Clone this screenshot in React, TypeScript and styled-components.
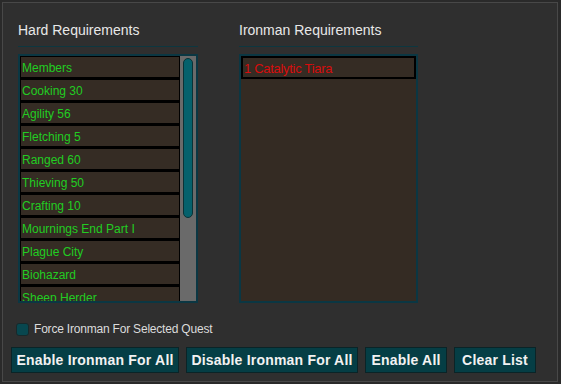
import React from 'react'
import styled, { createGlobalStyle } from 'styled-components'

const GlobalStyle = createGlobalStyle`
  html, body {
    margin: 0;
    padding: 0;
    background: #2a2a2a;
  }
`

const Frame = styled.div`
  box-sizing: border-box;
  margin: 2px;
  width: 556px;
  height: 380px;
  border: 1px solid #484848;
  background: #2f2f2f;
  font-family: 'Liberation Sans', Arial, sans-serif;
  display: flex;
  flex-direction: column;
`

const Columns = styled.div`
  display: flex;
  gap: 41px;
  padding: 19px 0 0 15px;
`

const Column = styled.div<{ $width: number }>`
  width: ${({ $width }) => $width}px;
  display: flex;
  flex-direction: column;
`

const Title = styled.div`
  height: 17px;
  line-height: 17px;
  font-size: 14px;
  color: #e8e8e8;
  white-space: nowrap;
`

const Rule = styled.div`
  margin-top: 7px;
  height: 1px;
  background: #0d3740;
`

const ListBox = styled.div<{ $filled?: boolean }>`
  box-sizing: border-box;
  margin-top: 7px;
  height: 249px;
  border: 2px solid #0b3743;
  display: flex;
  background: ${({ $filled }) => ($filled ? '#342b23' : '#2f2f2f')};
  overflow: hidden;
`

const Rows = styled.div<{ $full?: boolean }>`
  width: ${({ $full }) => ($full ? '100%' : '160px')};
  display: flex;
  flex-direction: column;
  overflow: hidden;
`

const Row = styled.div<{ $tone: 'green' | 'red'; $thick?: boolean }>`
  flex: none;
  box-sizing: border-box;
  height: 23px;
  border: ${({ $thick }) => ($thick ? '2px' : '1px')} solid #000;
  border-bottom-width: 2px;
  background: #352c24;
  padding: 1px 0 0 1px;
  display: flex;
  align-items: center;
  font-size: ${({ $thick }) => ($thick ? 13 : 12)}px;
  letter-spacing: ${({ $thick }) => ($thick ? '-0.3px' : '0')};
  white-space: nowrap;
  color: ${({ $tone }) => ($tone === 'green' ? '#22cc22' : '#d80c0c')};
`

const Track = styled.div`
  width: 16px;
  background: #6a6a6a;
  padding: 2px 0 0 3px;
  box-sizing: border-box;
`

const Thumb = styled.div`
  box-sizing: border-box;
  width: 10px;
  height: 160px;
  border: 1px solid #0b3236;
  border-radius: 5px;
  background: #05616c;
`

const Bottom = styled.div`
  display: flex;
  flex-direction: column;
  margin-top: 20px;
`

const CheckRow = styled.label`
  display: flex;
  align-items: center;
  gap: 5px;
  margin-left: 13px;
  height: 12px;
  font-size: 12px;
  letter-spacing: -0.2px;
  color: #dcdcdc;
  white-space: nowrap;
`

const Box = styled.span`
  box-sizing: border-box;
  flex: none;
  width: 13px;
  height: 13px;
  border: 1px solid #17292b;
  border-radius: 3px;
  background: #08474f;
`

const Buttons = styled.div`
  display: flex;
  gap: 7px;
  margin: 12px 0 0 8px;
`

const Button = styled.button<{ $w: number }>`
  box-sizing: border-box;
  width: ${({ $w }) => $w}px;
  height: 26px;
  padding: 0;
  border: 1px solid #0a2427;
  border-radius: 0;
  background: #053e45;
  color: #f2f2f2;
  font-family: 'Liberation Sans', Arial, sans-serif;
  font-weight: bold;
  font-size: 14px;
  letter-spacing: 0.2px;
  white-space: nowrap;
  text-align: center;
`

const hard = [
  'Members',
  'Cooking 30',
  'Agility 56',
  'Fletching 5',
  'Ranged 60',
  'Thieving 50',
  'Crafting 10',
  'Mournings End Part I',
  'Plague City',
  'Biohazard',
  'Sheep Herder',
]

export default function App() {
  return (
    <>
      <GlobalStyle />
      <Frame>
        <Columns>
          <Column $width={180}>
            <Title>Hard Requirements</Title>
            <Rule />
            <ListBox>
              <Rows>
                {hard.map((item) => (
                  <Row key={item} $tone="green">
                    {item}
                  </Row>
                ))}
              </Rows>
              <Track>
                <Thumb />
              </Track>
            </ListBox>
          </Column>
          <Column $width={179}>
            <Title>Ironman Requirements</Title>
            <Rule />
            <ListBox $filled>
              <Rows $full>
                <Row $tone="red" $thick>
                  1 Catalytic Tiara
                </Row>
              </Rows>
            </ListBox>
          </Column>
        </Columns>
        <Bottom>
          <CheckRow>
            <Box />
            Force Ironman For Selected Quest
          </CheckRow>
          <Buttons>
            <Button $w={168}>Enable Ironman For All</Button>
            <Button $w={172}>Disable Ironman For All</Button>
            <Button $w={82}>Enable All</Button>
            <Button $w={82}>Clear List</Button>
          </Buttons>
        </Bottom>
      </Frame>
    </>
  )
}
